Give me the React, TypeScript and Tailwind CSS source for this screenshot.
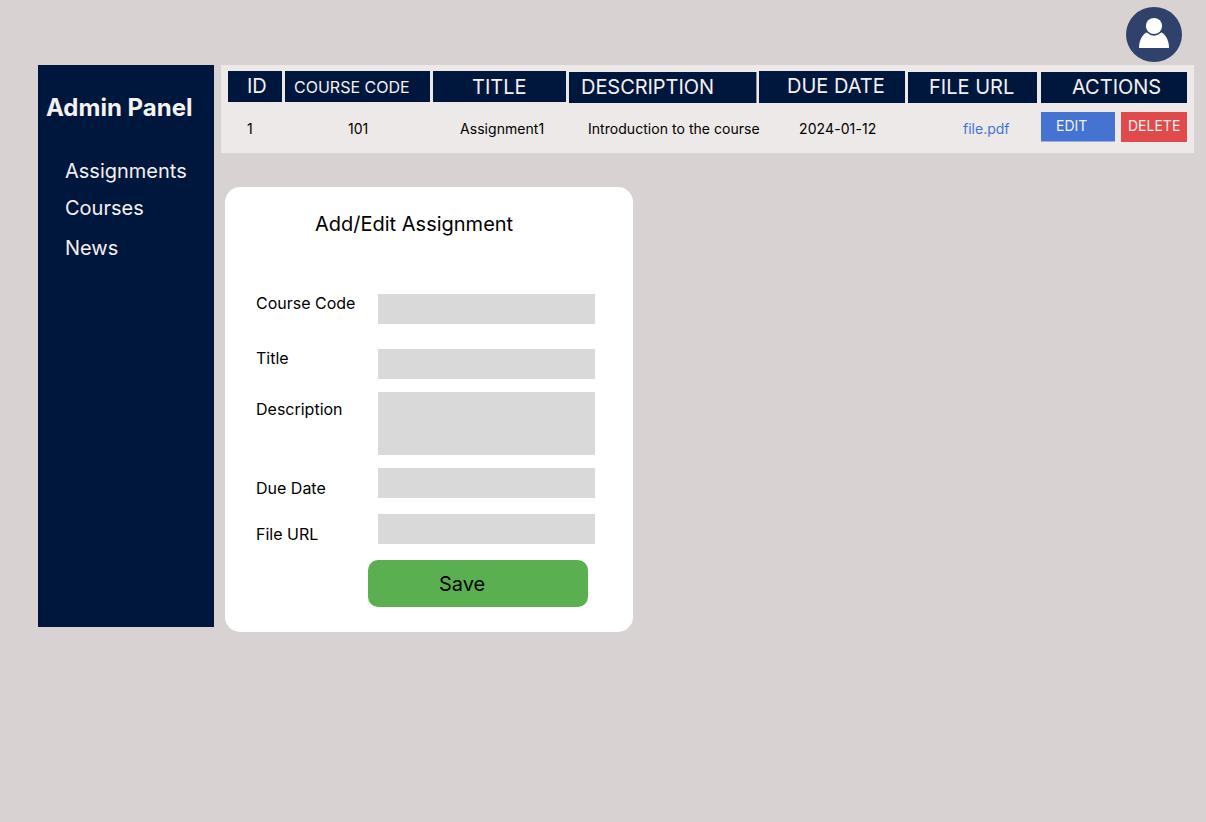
const columns = [
  { label: "ID", cell: "mr-[3px] h-[31px] w-[54px] pl-[19px] pt-[3px] text-xl/6" },
  { label: "COURSE CODE", cell: "mr-[3px] h-[31px] w-[145px] pl-[9px] pt-[7px] text-base/[19px]" },
  { label: "TITLE", cell: "mr-[3px] h-[31px] w-[133px] pl-[39px] pt-1 text-xl/6" },
  { label: "DESCRIPTION", cell: "mr-0.5 mt-px h-[31px] w-[188px] border-r border-[#8c8e9a] pl-3 pt-[3px] text-xl/6 tracking-[-0.05px]" },
  { label: "DUE DATE", cell: "mr-[3px] h-8 w-[146px] pl-7 pt-[3px] text-xl/6" },
  { label: "FILE URL", cell: "mr-1 mt-px h-[31px] w-[129px] pl-[21px] pt-[3px] text-xl/6" },
  { label: "ACTIONS", cell: "mt-px h-[31px] w-[146px] pl-[31px] pt-[3px] text-xl/6" },
];

const fields = [
  { label: "Course Code", row: "", input: "h-[30px]", text: "" },
  { label: "Title", row: "mt-[25px]", input: "h-[30px]", text: "" },
  { label: "Description", row: "mt-[13px]", input: "h-[63px]", text: "pt-2" },
  { label: "Due Date", row: "mt-[13px]", input: "h-[30px]", text: "pt-[11px]" },
  { label: "File URL", row: "mt-4", input: "h-[30px]", text: "pt-[11px]" },
];

function Avatar() {
  return (
    <svg className="h-[55px] w-14" viewBox="0 0 56 55" aria-label="Account">
      <ellipse cx="28" cy="27.5" rx="28" ry="27.5" fill="#30426b" />
      <path d="M13 41C13 34 15.6 28.8 20.2 25.5H35.8C40.4 28.8 43 34 43 41Z" fill="#fff" />
      <circle cx="28" cy="19" r="9.7" fill="#30426b" />
      <circle cx="28" cy="19" r="8.1" fill="#fff" />
    </svg>
  );
}

function Sidebar() {
  return (
    <aside className="h-[562px] w-44 shrink-0 bg-[#00173d] pt-7 text-[#f4f1f1]">
      <h1 className="pl-2 text-2xl/[29px] font-bold">Admin Panel</h1>
      <nav className="mt-[37px] flex flex-col pl-[27px] text-xl/6">
        <a>Assignments</a>
        <a className="mt-[13px]">Courses</a>
        <a className="mt-4">News</a>
      </nav>
    </aside>
  );
}

function AssignmentTable() {
  return (
    <section className="h-[88px] w-[973px] bg-[#ede9e8] pl-[7px] pt-1.5">
      <div className="flex h-8 items-start">
        {columns.map((c) => (
          <div key={c.label} className={`shrink-0 bg-[#00173d] text-[#f4f1f1] ${c.cell}`}>
            {c.label}
          </div>
        ))}
      </div>
      <div className="mt-[9px] flex text-sm/[17px]">
        <div className="grid w-[813px] shrink-0 grid-cols-[101px_112px_128px_211px_164px_78px] pl-[19px] pt-2">
          <span>1</span>
          <span>101</span>
          <span className="tracking-[0.05px]">Assignment1</span>
          <span className="tracking-[0.04px]">Introduction to the course</span>
          <span className="tracking-[0.1px]">2024-01-12</span>
          <a className="text-[#4573d2]">file.pdf</a>
        </div>
        <button className="h-[30px] w-[74px] border-b border-[#99aedd] bg-[#4573d2] bg-clip-padding pb-[3px] pl-[15px] text-left text-[#f4f1f1]">
          EDIT
        </button>
        <button className="ml-1.5 h-[30px] w-[66px] bg-[#e04a4a] pb-[3px] pl-[7px] text-left text-[#f4f1f1]">DELETE</button>
      </div>
    </section>
  );
}

function AssignmentForm() {
  return (
    <section className="ml-1 mt-[34px] h-[445px] w-[408px] rounded-[15px] bg-white pt-[25px]">
      <h2 className="pl-[90px] text-xl/6">Add/Edit Assignment</h2>
      <div className="mt-[58px] pl-[31px]">
        {fields.map((f) => (
          <label key={f.label} className={`flex items-start ${f.row}`}>
            <span className={`w-[122px] shrink-0 text-base/[19px] ${f.text}`}>{f.label}</span>
            <span className={`w-[217px] bg-[#d9d9d9] ${f.input}`} />
          </label>
        ))}
      </div>
      <button className="ml-[143px] mt-4 block h-[47px] w-[220px] rounded-[10px] bg-[#5ab051] pl-[71px] text-left text-xl/6">
        Save
      </button>
    </section>
  );
}

export default function App() {
  return (
    <div className="h-[822px] w-[1206px] overflow-hidden whitespace-nowrap bg-[#d9d2d2] font-['Inter',sans-serif] text-black">
      <header className="flex h-[65px] justify-end pr-6 pt-[7px]">
        <Avatar />
      </header>
      <main className="flex gap-[7px] pl-[38px]">
        <Sidebar />
        <div>
          <AssignmentTable />
          <AssignmentForm />
        </div>
      </main>
    </div>
  );
}
